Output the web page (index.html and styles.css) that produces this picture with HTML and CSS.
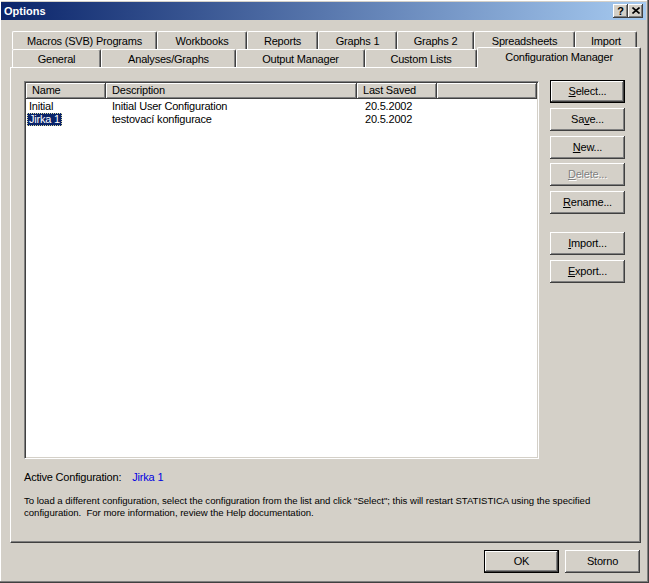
FILE: index.html
```html
<!DOCTYPE html>
<html>
<head>
<meta charset="utf-8">
<title>Options</title>
<link rel="stylesheet" href="styles.css">
</head>
<body>
<div class="window">
  <div class="titlebar">
    <span class="title">Options</span>
    <div class="caption-buttons">
      <span class="cap-btn help">?</span>
      <span class="cap-btn close"><svg width="8" height="7" viewBox="0 0 8 7"><path d="M0.5 0.5 L7.5 6.5 M7.5 0.5 L0.5 6.5" stroke="#000" stroke-width="1.6" fill="none"/></svg></span>
    </div>
  </div>
  <div class="main">
    <div class="tabs">
      <div class="tab-row">
        <div class="tab t-macros">Macros (SVB) Programs</div>
        <div class="tab t-workbooks">Workbooks</div>
        <div class="tab t-reports">Reports</div>
        <div class="tab t-graphs1">Graphs 1</div>
        <div class="tab t-graphs2">Graphs 2</div>
        <div class="tab t-spread">Spreadsheets</div>
        <div class="tab t-import">Import</div>
      </div>
      <div class="tab-row">
        <div class="tab t-general">General</div>
        <div class="tab t-analyses">Analyses/Graphs</div>
        <div class="tab t-output">Output Manager</div>
        <div class="tab t-custom">Custom Lists</div>
        <div class="tab t-config selected">Configuration Manager</div>
      </div>
    </div>
    <div class="panel">
      <div class="panel-top">
        <div class="listview">
          <div class="lv-header">
            <div class="hcell c-name">Name</div>
            <div class="hcell c-desc">Description</div>
            <div class="hcell c-date">Last Saved</div>
            <div class="hcell c-fill"></div>
          </div>
          <div class="lv-row">
            <div class="cell c-name"><span class="label">Initial</span></div>
            <div class="cell c-desc">Initial User Configuration</div>
            <div class="cell c-date">20.5.2002</div>
          </div>
          <div class="lv-row">
            <div class="cell c-name"><span class="label focused">Jirka 1</span></div>
            <div class="cell c-desc">testovací konfigurace</div>
            <div class="cell c-date">20.5.2002</div>
          </div>
        </div>
        <div class="side-buttons">
          <div class="btn default"><u>S</u>elect...</div>
          <div class="btn">Sa<u>v</u>e...</div>
          <div class="btn"><u>N</u>ew...</div>
          <div class="btn disabled"><u>D</u>elete...</div>
          <div class="btn"><u>R</u>ename...</div>
          <div class="btn-spacer"></div>
          <div class="btn"><u>I</u>mport...</div>
          <div class="btn"><u>E</u>xport...</div>
        </div>
      </div>
      <div class="active">
        <span>Active Configuration:</span>
        <span class="active-name">Jirka 1</span>
      </div>
      <p class="hint">To load a different configuration, select the configuration from the list and click "Select"; this will restart STATISTICA using the specified configuration.&nbsp; For more information, review the Help documentation.</p>
    </div>
    <div class="footer">
      <div class="btn default">OK</div>
      <div class="btn">Storno</div>
    </div>
  </div>
</div>
</body>
</html>
```
FILE: styles.css
```css
html, body {
  margin: 0;
  padding: 0;
  background: #d4d0c8;
}

body {
  font-family: "Liberation Sans", Arial, sans-serif;
  font-size: 11px;
  letter-spacing: -0.2px;
  color: #000;
}

.window {
  width: 649px;
  height: 583px;
  box-sizing: border-box;
  padding: 2px 3px 2px 1px;
  background: #d4d0c8;
  box-shadow: inset -1px -1px #404040, inset -2px -2px #808080, inset 1px 1px #ffffff;
  display: flex;
  flex-direction: column;
}

/* Title bar */
.titlebar {
  height: 18px;
  flex: none;
  display: flex;
  align-items: center;
  justify-content: space-between;
  background: linear-gradient(to right, #0a246a, #a6caf0);
}

.title {
  color: #fff;
  font-weight: bold;
  letter-spacing: 0;
  padding-left: 3px;
  line-height: 18px;
}

.caption-buttons {
  display: flex;
  margin-right: 3px;
}

.cap-btn {
  width: 15px;
  height: 14px;
  box-sizing: border-box;
  background: #d4d0c8;
  box-shadow: inset -1px -1px #404040, inset 1px 1px #ffffff, inset -2px -2px #808080;
  display: flex;
  align-items: center;
  justify-content: center;
}

.cap-btn.help {
  font-weight: bold;
  font-size: 11px;
  letter-spacing: 0;
  line-height: 14px;
  padding-bottom: 1px;
}

.cap-btn.close svg {
  display: block;
  margin-bottom: 1px;
}

/* Main area */
.main {
  flex: 1;
  padding: 11px 5px 0 9px;
  display: flex;
  flex-direction: column;
}

.tabs {
  padding-left: 2px;
}

.tab-row {
  display: flex;
  height: 18px;
}

.tab {
  box-sizing: border-box;
  height: 18px;
  border-top: 1px solid #fff;
  border-left: 1px solid #fff;
  border-right: 1px solid #404040;
  border-radius: 2px 2px 0 0;
  box-shadow: inset -1px 0 #808080;
  text-align: center;
  line-height: 16px;
  padding-top: 1px;
  white-space: nowrap;
  background: #d4d0c8;
}

.t-macros { width: 145px; }
.t-workbooks { width: 90px; }
.t-reports { width: 71px; }
.t-graphs1 { width: 79px; }
.t-graphs2 { width: 77px; }
.t-spread { width: 101px; }
.t-import { width: 62px; }

.t-general { width: 89px; }
.t-analyses { width: 135px; }
.t-output { width: 129px; }
.t-custom { width: 112px; }
.t-config { width: 164px; }

.tab.selected {
  height: 21px;
  margin-top: -2px;
  margin-bottom: -1px;
  line-height: 17px;
  padding-top: 1px;
  position: relative;
  z-index: 1;
}

/* Panel */
.panel {
  width: 631px;
  height: 476px;
  box-sizing: border-box;
  border-top: 1px solid #fff;
  border-left: 1px solid #fff;
  border-right: 1px solid #404040;
  border-bottom: 1px solid #404040;
  box-shadow: inset -1px -1px #808080;
  padding: 12px 13px 0 13px;
}

.panel-top {
  display: flex;
  gap: 11px;
  align-items: flex-start;
}

.listview {
  width: 515px;
  height: 378px;
  margin-top: 1px;
  box-sizing: border-box;
  background: #fff;
  border-top: 1px solid #808080;
  border-left: 1px solid #808080;
  border-right: 1px solid #fff;
  border-bottom: 1px solid #fff;
  box-shadow: inset 1px 1px #404040, inset -1px -1px #d4d0c8;
  padding: 1px;
}

.lv-header {
  display: flex;
  height: 16px;
}

.hcell {
  box-sizing: border-box;
  height: 16px;
  background: #d4d0c8;
  box-shadow: inset -1px -1px #404040, inset 1px 1px #fff, inset -2px -2px #808080;
  padding-left: 6px;
  line-height: 15px;
  white-space: nowrap;
}

.c-name { width: 80px; }
.c-desc { width: 251px; }
.c-date { width: 80px; }
.c-fill { width: 100px; padding: 0; }

.lv-row {
  display: flex;
  height: 13px;
  line-height: 13px;
}

.lv-header + .lv-row {
  margin-top: 1px;
}

.cell {
  box-sizing: border-box;
  white-space: nowrap;
  padding-left: 6px;
}

.cell.c-name {
  padding-left: 1px;
}

.cell.c-date {
  padding-left: 8px;
}

.label {
  display: inline-block;
  box-sizing: border-box;
  height: 13px;
  line-height: 11px;
  padding: 0 1px;
  border: 1px solid transparent;
  vertical-align: top;
}

.label.focused {
  background: #0a246a;
  color: #fff;
  border: 1px dotted #d8d8a0;
}

/* Buttons */
.side-buttons {
  width: 75px;
  display: flex;
  flex-direction: column;
  gap: 4.75px;
}

.btn-spacer {
  height: 8.5px;
}

.btn {
  width: 75px;
  height: 23px;
  box-sizing: border-box;
  background: #d4d0c8;
  box-shadow: inset -1px -1px #404040, inset 1px 1px #fff, inset -2px -2px #808080;
  text-align: center;
  line-height: 22px;
  white-space: nowrap;
}

.btn.default {
  border: 1px solid #000;
  line-height: 20px;
}

.btn.disabled {
  color: #808080;
  text-shadow: 1px 1px 0 #fff;
}

.btn u {
  text-decoration: underline;
  text-underline-offset: 1px;
}

/* Active configuration and hint */
.active {
  margin-top: 12px;
  height: 13px;
  line-height: 13px;
  display: flex;
  gap: 11px;
}

.active-name {
  color: #0000e0;
}

.hint {
  margin: 11px 0 0 0;
  font-size: 9.6px;
  letter-spacing: -0.03px;
  line-height: 11.5px;
}

/* Footer */
.footer {
  margin-top: 7px;
  display: flex;
  justify-content: flex-end;
  gap: 6px;
  padding-right: 1px;
}
```
